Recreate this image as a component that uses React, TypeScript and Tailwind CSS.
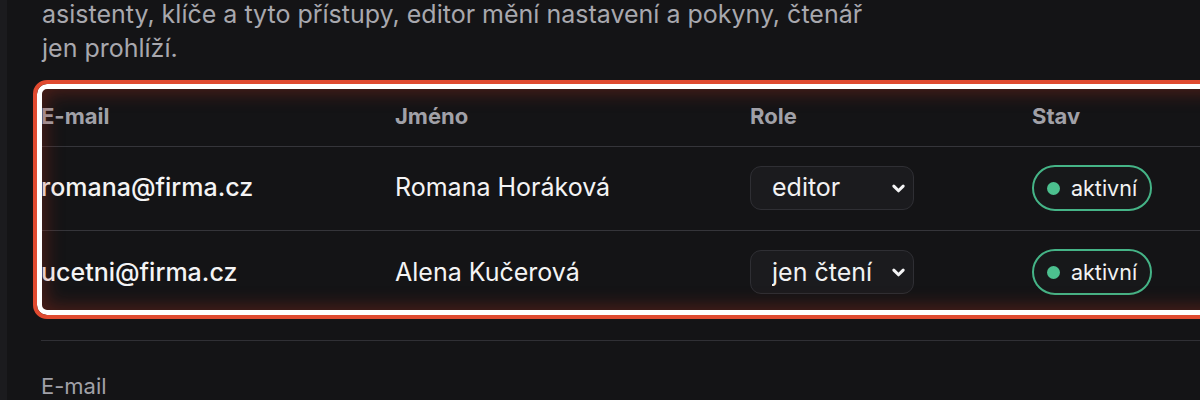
import * as React from 'react';

const users = [
  { email: 'romana@firma.cz', name: 'Romana Horáková', role: 'editor' },
  { email: 'ucetni@firma.cz', name: 'Alena Kučerová', role: 'jen čtení' },
];

function RoleSelect({ value }: { value: string }) {
  return (
    <div className="relative w-[164px] h-[44px]">
      <select
        defaultValue={value}
        className="appearance-none w-full h-full rounded-[11px] border border-[#2f2f34] bg-[#1b1b1e] pl-[21px] pr-8 text-[25px] text-[#f2f2f3] outline-none"
      >
        <option>editor</option>
        <option>jen čtení</option>
        <option>admin</option>
      </select>
      <svg
        className="pointer-events-none absolute right-[8px] top-1/2 -translate-y-1/2 w-[15px] h-[15px]"
        viewBox="0 0 16 16"
        fill="none"
        stroke="#f4f4f5"
        strokeWidth="3.2"
        strokeLinecap="round"
        strokeLinejoin="round"
      >
        <path d="M3 6l5 5 5-5" />
      </svg>
    </div>
  );
}

function StatusBadge() {
  return (
    <span className="inline-flex items-center gap-[11px] h-[46px] rounded-full border-2 border-[#45b487] bg-[#17181a] pl-[13px] pr-[13px] text-[21.5px] text-[#f2f2f3]">
      <span className="w-[13px] h-[13px] rounded-full bg-[#4cc08f]" />
      aktivní
    </span>
  );
}

export default function App() {
  return (
    <div
      className="h-[400px] w-[1200px] overflow-hidden bg-[#141416] flex"
      style={{ fontFamily: 'Inter, "Noto Sans", sans-serif' }}
    >
      {/* sidebar edge */}
      <div className="w-[7px] shrink-0 bg-[#1b1b1e]" />

      <div className="flex-1 pl-[34px] overflow-hidden">
        <p className="-mt-[3px] max-w-[840px] text-[25px] leading-[34px] text-[#a8a8ae] pl-px">
          asistenty, klíče a tyto přístupy, editor mění nastavení a pokyny, čtenář jen prohlíží.
        </p>

        {/* highlighted table */}
        <div className="relative mt-[23px] w-[1260px]">
          <table className="w-full table-fixed border-collapse">
            <thead>
              <tr className="h-[58px] border-b border-[#35353a]">
                <th className="w-[354px] text-left text-[22px] font-bold text-[#a1a1a8]">E-mail</th>
                <th className="w-[355px] text-left text-[22px] font-bold text-[#a1a1a8]">Jméno</th>
                <th className="w-[282px] text-left text-[22px] font-bold text-[#a1a1a8]">Role</th>
                <th className="text-left text-[22px] font-bold text-[#a1a1a8]">Stav</th>
              </tr>
            </thead>
            <tbody>
              {users.map((u, i) => (
                <tr
                  key={u.email}
                  className={i === 0 ? 'h-[84px] border-b border-[#35353a]' : 'h-[84px]'}
                >
                  <td className="text-[25px] font-medium text-[#f4f4f5]">{u.email}</td>
                  <td className="text-[25px] text-[#f4f4f5]">{u.name}</td>
                  <td>
                    <RoleSelect value={u.role} />
                  </td>
                  <td>
                    <StatusBadge />
                  </td>
                </tr>
              ))}
            </tbody>
          </table>

          {/* selection ring over the table */}
          <div className="pointer-events-none absolute -top-[8px] -left-[8px] -right-[8px] -bottom-[5px] rounded-[14px] border-4 border-[#e04a30] shadow-[inset_0_0_0_5px_#ffffff,inset_0_0_18px_9px_rgba(180,50,30,0.35)]" />
        </div>

        <div className="mt-[26px] h-px bg-[#303035]" />

        <div className="mt-[29px] text-[22px] text-[#a1a1a8]">E-mail</div>
      </div>
    </div>
  );
}
